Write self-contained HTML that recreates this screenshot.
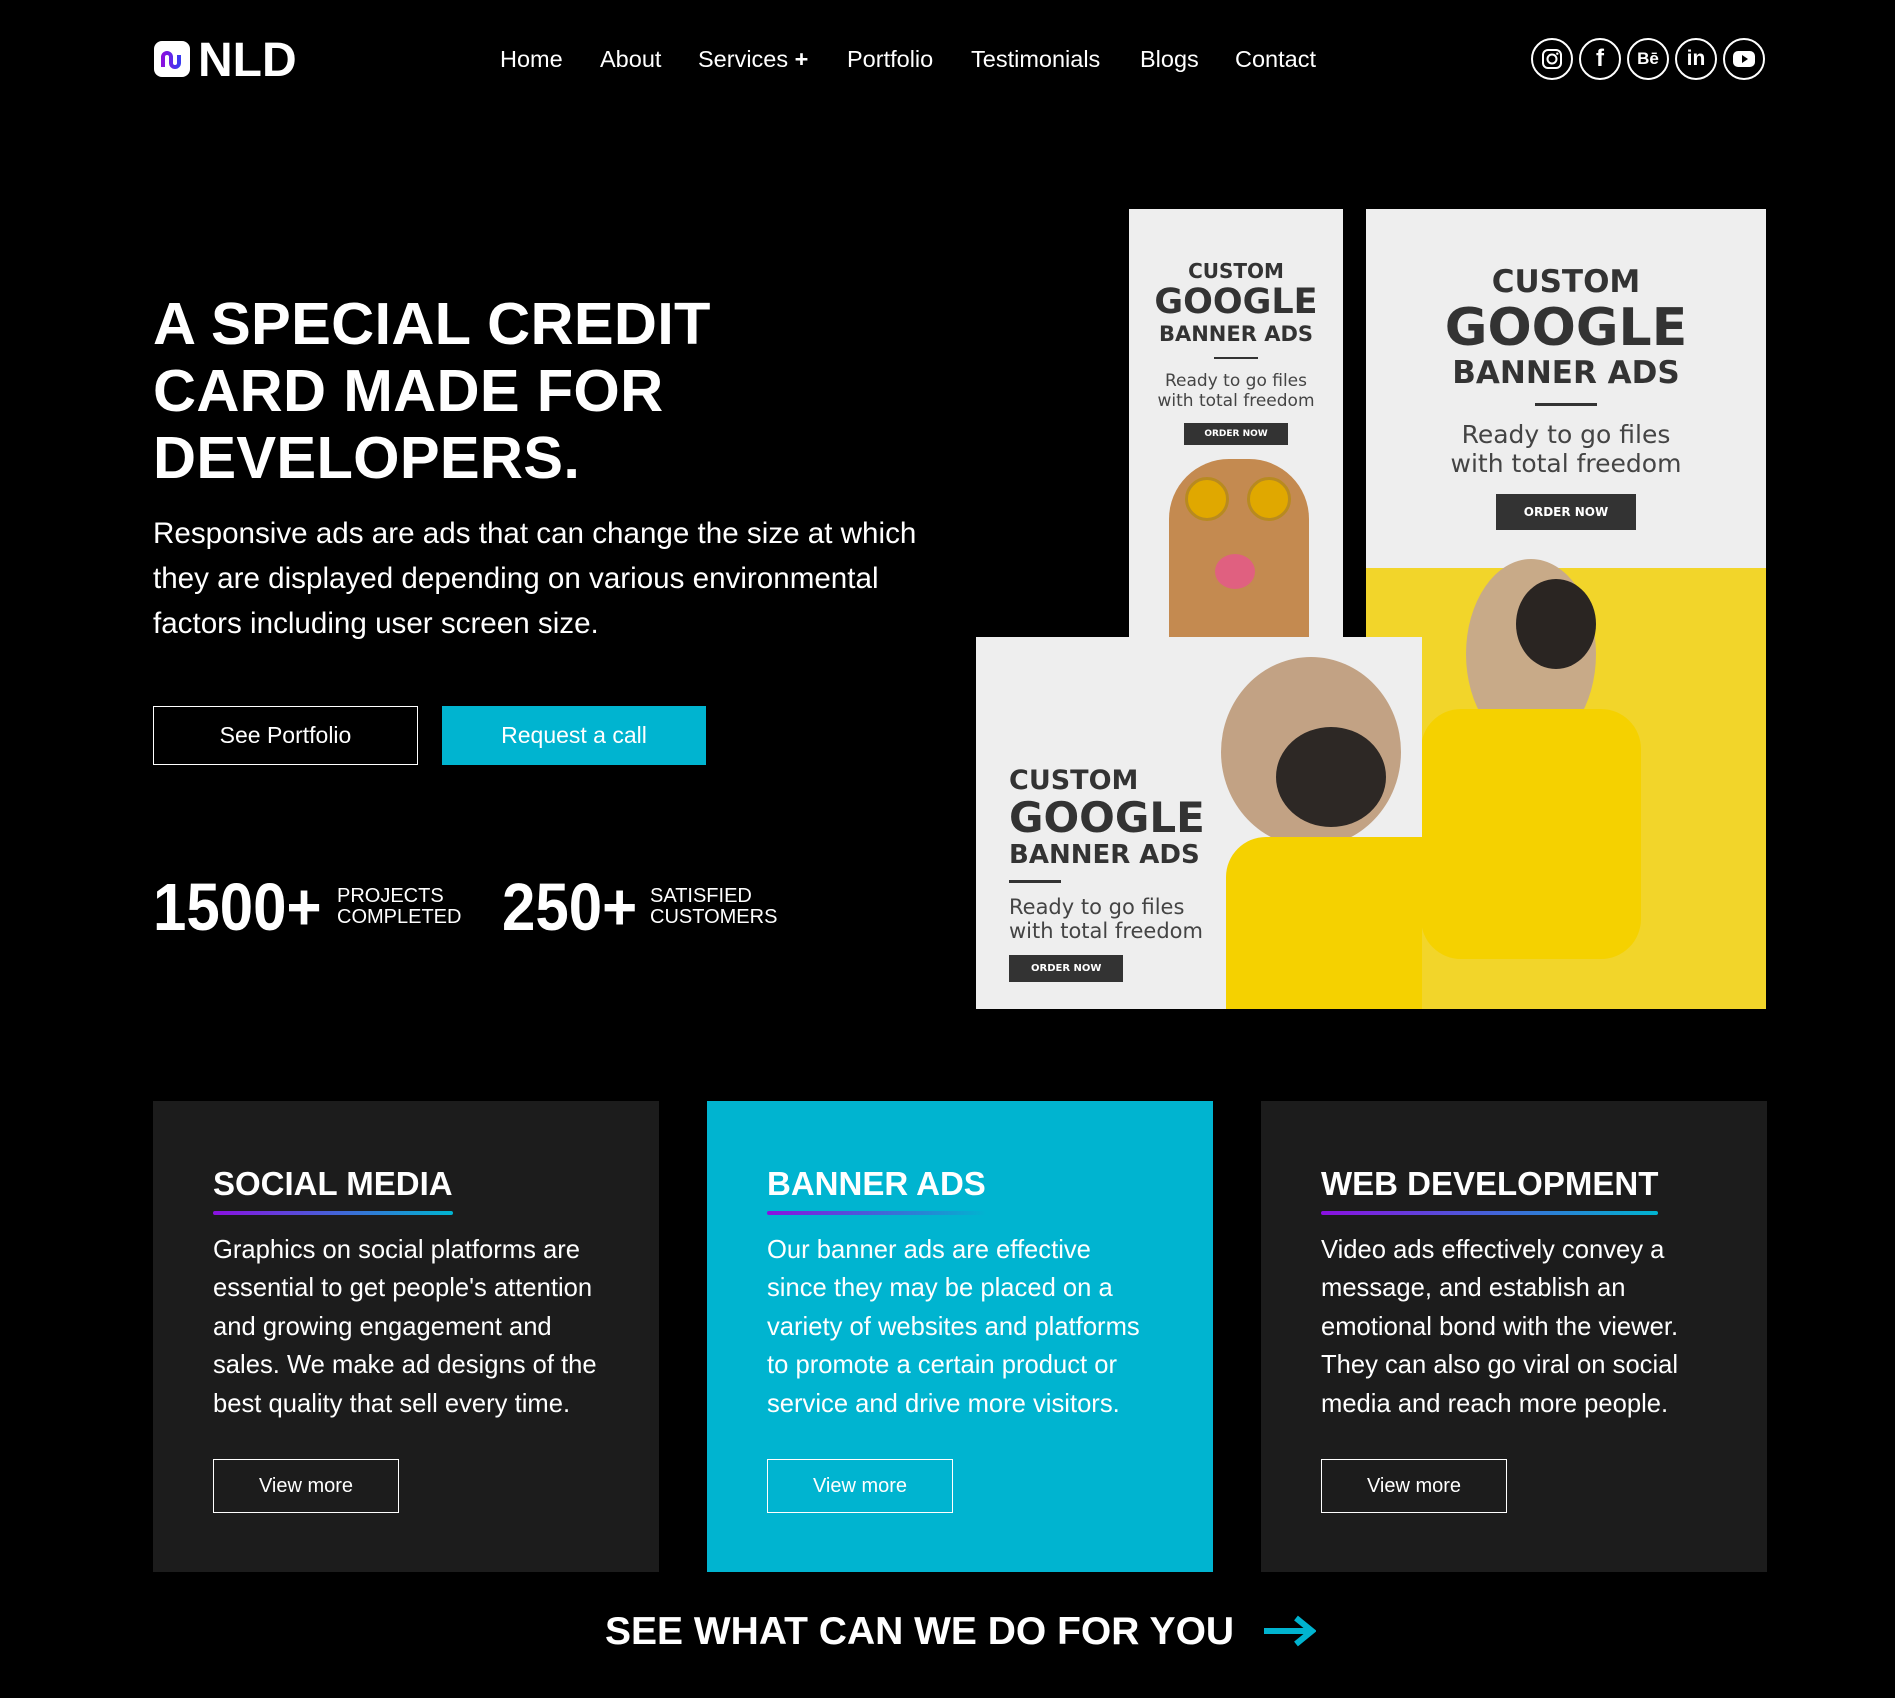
<!DOCTYPE html>
<html><head><meta charset="utf-8">
<style>
*{margin:0;padding:0;box-sizing:border-box}
body{width:1895px;height:1698px;background:#000;color:#fff;font-family:"Liberation Sans",Arial,sans-serif;position:relative;overflow:hidden}
.abs{position:absolute}
.nav a{position:absolute;top:46px;font-size:23.5px;color:#fff;text-decoration:none;white-space:nowrap}
.soc{position:absolute;top:38px;width:42px;height:42px;border:2px solid #fff;border-radius:50%;display:flex;align-items:center;justify-content:center;font-weight:bold;font-size:18px}
h1{position:absolute;left:153px;top:290px;font-size:59.6px;line-height:67px;font-weight:bold;letter-spacing:0.3px}
.lead{position:absolute;left:153px;top:511px;width:810px;font-size:29.6px;line-height:45px}
.btn{position:absolute;top:706px;height:59px;font-size:23px;display:flex;align-items:center;justify-content:center}
.num{position:absolute;top:874px;font-size:60px;font-weight:bold;transform:scaleY(1.12);transform-origin:top left;line-height:60px}
.lab{position:absolute;top:886px;font-size:20px;line-height:21px}
.card{position:absolute;top:1101px;width:506px;height:471px;background:#1c1c1c;padding:64px 0 0 60px}
.card h3{font-size:33px;font-weight:bold;display:inline-block;padding-bottom:6px;position:relative}
.card h3:after{content:"";position:absolute;left:0;right:0;bottom:-6px;height:4px;border-radius:2px;background:linear-gradient(90deg,#8a10e0,#00b4d0)}
.card p{margin-top:22px;font-size:25.6px;line-height:38.4px;width:388px}
.vm{position:absolute;left:60px;top:358px;width:186px;height:54px;border:1.5px solid #fff;font-size:20px;display:flex;align-items:center;justify-content:center}
.ad{position:absolute;background:#eeeeee;color:#333;text-align:center;font-family:"DejaVu Sans","Liberation Sans",sans-serif;font-weight:bold;overflow:hidden}
.ad .c{line-height:1}
.ad .r{font-weight:normal;color:#444}
.ad .o{background:#333;color:#fff;display:inline-block}
</style></head><body>
<div class="abs" style="left:154px;top:41px;width:36px;height:36px;background:#fff;border-radius:8px"></div>
<svg class="abs" style="left:158px;top:47px" width="28" height="26" viewBox="0 0 28 26"><path d="M5 20 V10 a4 4 0 0 1 8 0 v6 a4 4 0 0 0 8 0 V8" fill="none" stroke="url(#g)" stroke-width="4"/><defs><linearGradient id="g" x1="0" x2="1"><stop offset="0" stop-color="#8a10e0"/><stop offset="1" stop-color="#3a3af0"/></linearGradient></defs></svg>
<div class="abs" style="left:198px;top:33px;font-size:48px;font-weight:bold">NLD</div>
<div class="nav">
<a style="left:500px">Home</a><a style="left:600px">About</a><a style="left:698px">Services <b>+</b></a><a style="left:847px">Portfolio</a><a style="left:971px">Testimonials</a><a style="left:1140px">Blogs</a><a style="left:1235px">Contact</a>
</div>
<div class="soc" style="left:1531px"><svg width="22" height="22" viewBox="0 0 22 22"><rect x="2" y="2" width="18" height="18" rx="5" fill="none" stroke="#fff" stroke-width="2"/><circle cx="11" cy="11" r="4.5" fill="none" stroke="#fff" stroke-width="2"/><circle cx="16.3" cy="5.7" r="1.2" fill="#fff"/></svg></div>
<div class="soc" style="left:1579px;font-size:24px">f</div>
<div class="soc" style="left:1627px;font-size:17px">Bē</div>
<div class="soc" style="left:1675px;font-size:21px">in</div>
<div class="soc" style="left:1723px"><svg width="24" height="18" viewBox="0 0 24 18"><rect x="1" y="1" width="22" height="16" rx="5" fill="#fff"/><path d="M10 5 L16 9 L10 13Z" fill="#000"/></svg></div>

<h1>A SPECIAL CREDIT<br>CARD MADE FOR<br>DEVELOPERS.</h1>
<div class="lead">Responsive ads are ads that can change the size at which they are displayed depending on various environmental factors including user screen size.</div>
<div class="btn" style="left:153px;width:265px;border:1.5px solid #fff">See Portfolio</div>
<div class="btn" style="left:442px;width:264px;background:#00b4d0">Request a call</div>
<div class="num" style="left:153px">1500+</div>
<div class="lab" style="left:337px">PROJECTS<br>COMPLETED</div>
<div class="num" style="left:502px">250+</div>
<div class="lab" style="left:650px">SATISFIED<br>CUSTOMERS</div>

<div class="ad" style="left:1129px;top:209px;width:214px;height:428px">
 <div style="margin-top:52px;font-size:20px" class="c">CUSTOM</div>
 <div style="font-size:35px;margin-top:4px" class="c">GOOGLE</div>
 <div style="font-size:21px;margin-top:4px" class="c">BANNER ADS</div>
 <div style="width:44px;height:2px;background:#333;margin:12px auto"></div>
 <div class="r" style="font-size:17px;line-height:20px">Ready to go files<br>with total freedom</div>
 <div class="o" style="font-size:9px;padding:6px 20px;margin-top:12px">ORDER NOW</div>
 <div style="position:absolute;left:40px;top:250px;width:140px;height:200px;border-radius:60px 60px 0 0;background:#c48a50"></div>
 <div style="position:absolute;left:56px;top:268px;width:44px;height:44px;border-radius:50%;background:#e0a800;border:3px solid #b88a20"></div>
 <div style="position:absolute;left:118px;top:268px;width:44px;height:44px;border-radius:50%;background:#e0a800;border:3px solid #b88a20"></div>
 <div style="position:absolute;left:86px;top:345px;width:40px;height:35px;border-radius:50%;background:#e06080"></div>
</div>
<div class="ad" style="left:1366px;top:209px;width:400px;height:800px">
 <div style="margin-top:58px;font-size:31px" class="c">CUSTOM</div>
 <div style="font-size:52px;margin-top:4px" class="c">GOOGLE</div>
 <div style="font-size:31px;margin-top:4px" class="c">BANNER ADS</div>
 <div style="width:62px;height:3px;background:#333;margin:14px auto"></div>
 <div class="r" style="font-size:25px;line-height:29px">Ready to go files<br>with total freedom</div>
 <div class="o" style="font-size:12px;padding:11px 28px;margin-top:16px">ORDER NOW</div>
 <div style="position:absolute;left:0;top:359px;width:400px;height:441px;background:#f2d52a"></div>
 <div style="position:absolute;left:100px;top:350px;width:130px;height:190px;border-radius:50%;background:#c8aa88"></div>
 <div style="position:absolute;left:150px;top:370px;width:80px;height:90px;border-radius:50%;background:#2a2522"></div>
 <div style="position:absolute;left:55px;top:500px;width:220px;height:250px;border-radius:40px;background:#f5d100"></div>
</div>
<div class="ad" style="left:976px;top:637px;width:446px;height:372px;text-align:left">
 <div style="position:absolute;left:33px;top:130px">
 <div style="font-size:27px" class="c">CUSTOM</div>
 <div style="font-size:42px;margin-top:3px" class="c">GOOGLE</div>
 <div style="font-size:26px;margin-top:3px" class="c">BANNER ADS</div>
 <div style="width:52px;height:3px;background:#333;margin:12px 0"></div>
 <div class="r" style="font-size:21px;line-height:24px">Ready to go files<br>with total freedom</div>
 <div class="o" style="font-size:10px;padding:8px 22px;margin-top:12px">ORDER NOW</div>
 </div>
 <div style="position:absolute;left:245px;top:20px;width:180px;height:190px;border-radius:50%;background:#c2a284"></div>
 <div style="position:absolute;left:300px;top:90px;width:110px;height:100px;border-radius:50%;background:#2d2825"></div>
 <div style="position:absolute;left:250px;top:200px;width:200px;height:180px;border-radius:40px 0 0 0;background:#f5d100"></div>
</div>

<div class="card" style="left:153px"><h3>SOCIAL MEDIA</h3><p>Graphics on social platforms are essential to get people's attention and growing engagement and sales. We make ad designs of the best quality that sell every time.</p><div class="vm">View more</div></div>
<div class="card" style="left:707px;background:#00b4d0"><h3>BANNER ADS</h3><p>Our banner ads are effective since they may be placed on a variety of websites and platforms to promote a certain product or service and drive more visitors.</p><div class="vm">View more</div></div>
<div class="card" style="left:1261px"><h3>WEB DEVELOPMENT</h3><p>Video ads effectively convey a message, and establish an emotional bond with the viewer. They can also go viral on social media and reach more people.</p><div class="vm">View more</div></div>

<div class="abs" style="left:605px;top:1610px;font-size:39px;font-weight:bold;white-space:nowrap">SEE WHAT CAN WE DO FOR YOU</div>
<svg class="abs" style="left:1262px;top:1614px" width="54" height="34" viewBox="0 0 54 34"><path d="M2 17 H48 M34 4 L50 17 L34 30" fill="none" stroke="#00b4d0" stroke-width="6"/></svg>
</body></html>
